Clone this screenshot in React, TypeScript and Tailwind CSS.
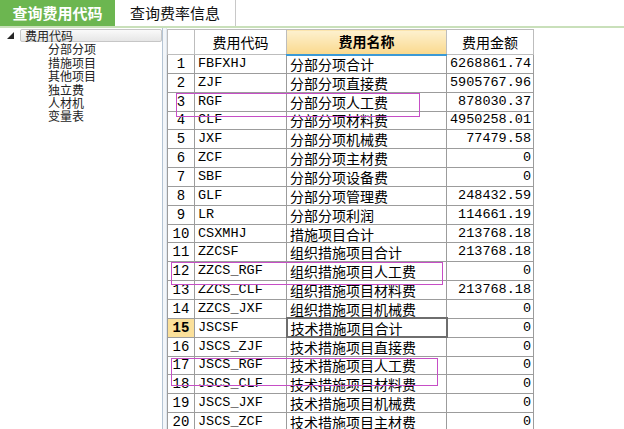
import React from "react";

const rows: [string, string, string][] = [
    ["FBFXHJ", "分部分项合计", "6268861.74"],
    ["ZJF", "分部分项直接费", "5905767.96"],
    ["RGF", "分部分项人工费", "878030.37"],
    ["CLF", "分部分项材料费", "4950258.01"],
    ["JXF", "分部分项机械费", "77479.58"],
    ["ZCF", "分部分项主材费", "0"],
    ["SBF", "分部分项设备费", "0"],
    ["GLF", "分部分项管理费", "248432.59"],
    ["LR", "分部分项利润", "114661.19"],
    ["CSXMHJ", "措施项目合计", "213768.18"],
    ["ZZCSF", "组织措施项目合计", "213768.18"],
    ["ZZCS_RGF", "组织措施项目人工费", "0"],
    ["ZZCS_CLF", "组织措施项目材料费", "213768.18"],
    ["ZZCS_JXF", "组织措施项目机械费", "0"],
    ["JSCSF", "技术措施项目合计", "0"],
    ["JSCS_ZJF", "技术措施项目直接费", "0"],
    ["JSCS_RGF", "技术措施项目人工费", "0"],
    ["JSCS_CLF", "技术措施项目材料费", "0"],
    ["JSCS_JXF", "技术措施项目机械费", "0"],
    ["JSCS_ZCF", "技术措施项目主材费", "0"],
];

const treeItems = ["分部分项", "措施项目", "其他项目", "独立费", "人材机", "变量表"];

const cjk = "font-['Noto_Sans_CJK_SC',sans-serif]";
const mono = "font-['Liberation_Mono','Noto_Sans_CJK_SC',monospace]";

export default function App() {
    const selectedRow = 15;

    return (
        <div className={`relative w-[624px] h-[429px] overflow-hidden bg-white text-black ${cjk}`}>
            {/* tabs */}
            <div className="flex h-[28px] border-b-2 border-[#c9e0ba]">
                <div className="flex w-[115px] items-center justify-center bg-[#6cb650] text-white font-bold text-[15px]">
                    查询费用代码
                </div>
                <div className="flex w-[121px] items-center justify-center bg-white border-r border-[#c8c8c8] text-[15px] text-[#111]">
                    查询费率信息
                </div>
            </div>

            <div className="flex h-[401px]">
                {/* tree panel */}
                <div className="w-[163px] shrink-0 border-r border-[#b4c4d4] pt-[1px] text-[12px] leading-[13.4px] text-[#222]">
                    <div className="flex items-center h-[13.4px]">
                        <div className="flex w-[20px] justify-center">
                            <svg width="7" height="7" viewBox="0 0 7 7">
                                <polygon points="7,0 7,7 0,7" fill="#262626" />
                            </svg>
                        </div>
                        <div className="flex-1 h-[13px] rounded-[2px] border border-[#c6c6c6] bg-gradient-to-b from-[#fafafa] to-[#e6e6e6] pl-[4px] leading-[11px]">
                            费用代码
                        </div>
                    </div>
                    {treeItems.map((t) => (
                        <div key={t} className="pl-[48px] h-[13.4px]">
                            {t}
                        </div>
                    ))}
                </div>
                <div className="w-[4px] shrink-0 bg-[#f3f6f9] border-r border-[#dfe6ee]" />

                {/* grid */}
                <div className="pt-[1px]">
                    <table className="table-fixed border-collapse w-[366px] text-[14px]">
                        <colgroup>
                            <col className="w-[27px]" />
                            <col className="w-[92px]" />
                            <col className="w-[160px]" />
                            <col className="w-[87px]" />
                        </colgroup>
                        <thead>
                            <tr className="h-[25px]">
                                <th className="border border-[#bdbdbd] bg-white" />
                                <th className="border border-[#bdbdbd] bg-white font-normal">费用代码</th>
                                <th className="border border-[#bdbdbd] border-b-2 border-b-[#3b9ad6] bg-gradient-to-b from-[#fdf1cf] to-[#fad98c] font-bold">
                                    费用名称
                                </th>
                                <th className="border border-[#bdbdbd] bg-white font-normal">费用金额</th>
                            </tr>
                        </thead>
                        <tbody>
                            {rows.map(([code, name, amount], i) => {
                                const n = i + 1;
                                const sel = n === selectedRow;
                                return (
                                    <tr key={code} className="h-[18.85px] leading-[16px]">
                                        <td
                                            className={`border border-[#9c9c9c] text-center px-0 ${mono} ${
                                                sel ? "bg-[#fbe09a] font-bold" : "bg-white"
                                            }`}>
                                            {n}
                                        </td>
                                        <td className={`border border-[#9c9c9c] pl-[3px] text-[13.5px] ${mono}`}>{code}</td>
                                        <td
                                            className={`pl-[3px] whitespace-nowrap overflow-hidden ${
                                                sel ? "border-2 border-[#6e6e6e]" : "border border-[#9c9c9c]"
                                            }`}>
                                            {name}
                                        </td>
                                        <td className={`border border-[#9c9c9c] text-right pr-[2px] text-[13.5px] ${mono}`}>
                                            {amount}
                                        </td>
                                    </tr>
                                );
                            })}
                        </tbody>
                    </table>
                </div>
            </div>

            {/* annotation boxes */}
            <div className="absolute left-[176px] top-[93px] w-[244px] h-[24px] border border-[#c64ec6]" />
            <div className="absolute left-[171px] top-[262px] w-[272px] h-[23px] border border-[#c64ec6]" />
            <div className="absolute left-[171px] top-[358px] w-[267px] h-[28px] border border-[#c64ec6]" />
        </div>
    );
}
